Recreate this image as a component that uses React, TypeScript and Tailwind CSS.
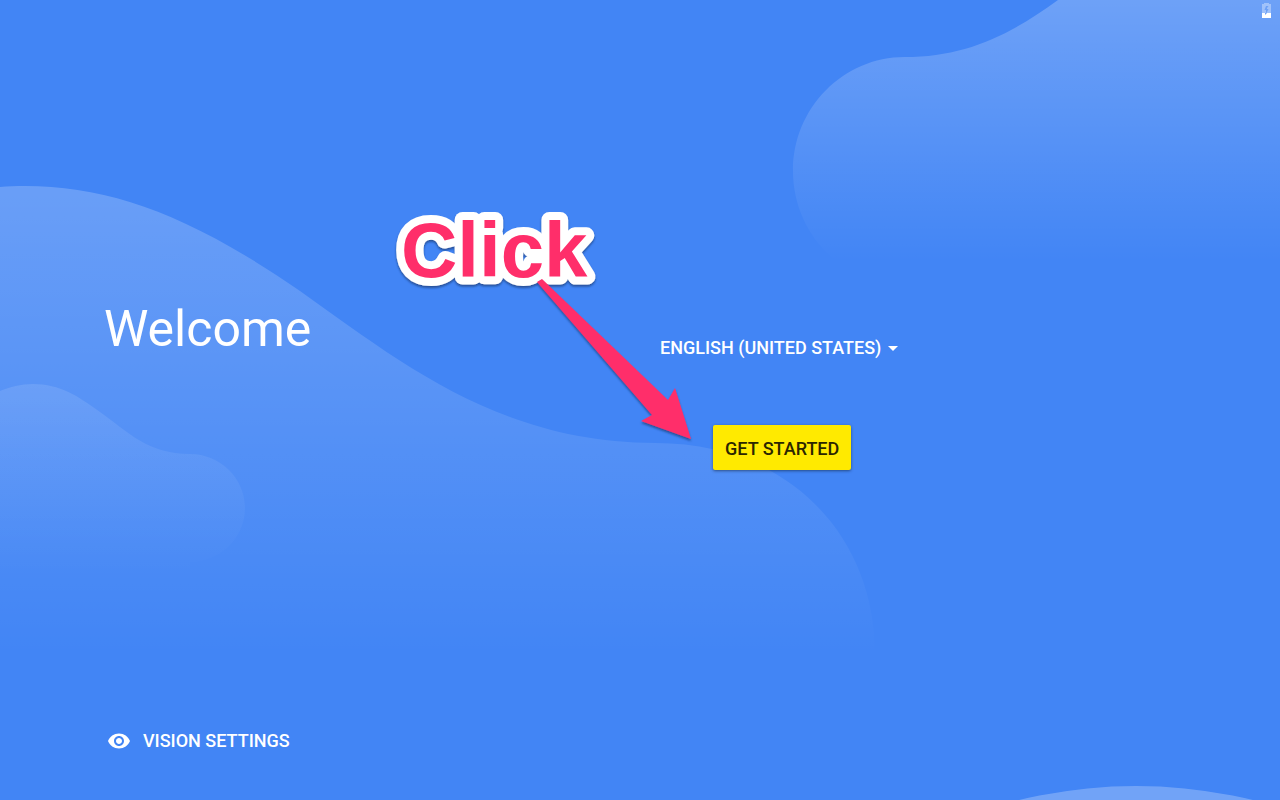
import { MdArrowDropDown, MdRemoveRedEye } from "react-icons/md";

function Backdrop() {
  return (
    <svg
      className="absolute inset-0 h-full w-full"
      viewBox="0 0 1280 800"
      preserveAspectRatio="none"
      aria-hidden="true"
    >
      <defs>
        <linearGradient id="fade" x1="0" y1="0" x2="0" y2="1">
          <stop offset="0" stopColor="#fff" stopOpacity="0.21" />
          <stop offset="1" stopColor="#fff" stopOpacity="0" />
        </linearGradient>
        <linearGradient id="fadeSmall" x1="0" y1="0" x2="0" y2="1">
          <stop offset="0" stopColor="#fff" stopOpacity="0.11" />
          <stop offset="1" stopColor="#fff" stopOpacity="0" />
        </linearGradient>
        <linearGradient id="fadeTop" gradientUnits="userSpaceOnUse" x1="0" y1="-10" x2="0" y2="262">
          <stop offset="0" stopColor="#fff" stopOpacity="0.24" />
          <stop offset="1" stopColor="#fff" stopOpacity="0" />
        </linearGradient>
      </defs>
      <path
        fill="url(#fade)"
        d="M0 187C8 186 16 186 25 186C110 186 190 215 300 291C400 362 500 443 655 443C785 443 875 532 875 655H0Z"
      />
      <path
        fill="url(#fadeSmall)"
        d="M0 391C10 387 21 384 33 384C60 384 78 396 100 412C128 432 148 454 190 454C220 454 245 478 245 508C245 538 220 562 190 562V574H0Z"
      />
      <path
        fill="url(#fadeTop)"
        d="M1058 0C1010 35 965 57 905 57C843 57 793 108 793 171C793 234 843 285 905 285H1280V0Z"
      />
      <circle cx="1136" cy="1281" r="495" fill="#fff" fillOpacity="0.25" />
    </svg>
  );
}

function BatteryIcon() {
  return (
    <svg className="h-4 w-[9px]" viewBox="0 0 9 16" role="img" aria-label="Battery charging">
      <path
        fill="#fff"
        fillOpacity="0.35"
        fillRule="evenodd"
        d="M2 0h5v1h2V10H4.5L6.5 6H5V5L6.5 3H4L2.5 7H4v3H0V1h2Z"
      />
      <path fill="#fff" d="M0 10H3v2L5 10H9v5H0Z" />
    </svg>
  );
}

function Annotation() {
  return (
    <svg
      className="pointer-events-none absolute top-[200px] left-[380px] h-[250px] w-[330px]"
      viewBox="0 0 330 250"
      role="img"
      aria-label="Click"
    >
      <defs>
        <filter id="drop" x="-10%" y="-10%" width="120%" height="120%">
          <feDropShadow dx="0" dy="2" stdDeviation="1" floodColor="#0b2a5c" floodOpacity="0.6" />
        </filter>
      </defs>
      <text
        x="21"
        y="77"
        fontSize="78"
        fontWeight="700"
        fill="#ff2d6b"
        stroke="#fff"
        strokeWidth="16"
        strokeLinejoin="round"
        paintOrder="stroke"
        filter="url(#drop)"
        className="font-['Liberation_Sans',Arial,sans-serif]"
      >
        Click
      </text>
      <path
        fill="#ff2d6b"
        filter="url(#drop)"
        d="M157 82L162 79L288 200L295 188L311 239L261 221L272 215Z"
      />
    </svg>
  );
}

export default function App() {
  return (
    <div className="relative flex min-h-screen flex-col overflow-hidden bg-[#4285f5] font-[Roboto,sans-serif] text-white">
      <Backdrop />
      <header className="relative flex justify-end px-[9px] pt-[3px]">
        <BatteryIcon />
      </header>
      <main className="relative grid flex-1 grid-cols-2 items-start pt-[277px]">
        <h1 className="pl-[104px] text-[50px] leading-[66px] font-normal">Welcome</h1>
        <div className="flex flex-col items-start pt-8 pl-5">
          <div className="flex flex-col items-center gap-[57px]">
            <div className="relative flex items-center">
              <select
                aria-label="Language"
                className="h-10 appearance-none bg-transparent pr-6 text-lg font-medium text-white [field-sizing:content]"
              >
                <option>ENGLISH (UNITED STATES)</option>
              </select>
              <MdArrowDropDown className="pointer-events-none absolute right-0 size-6" />
            </div>
            <button
              type="button"
              className="mr-px h-[45px] rounded-xs bg-[#ffea00] px-3 pt-0.5 text-lg font-medium text-[#2b2600] shadow-[0_1px_3px_rgba(0,0,0,0.45)]"
            >
              GET STARTED
            </button>
          </div>
        </div>
      </main>
      <footer className="relative px-[107px] pb-[39px]">
        <button type="button" className="flex h-10 items-center gap-3 text-lg font-medium">
          <MdRemoveRedEye className="size-6" />
          VISION SETTINGS
        </button>
      </footer>
      <Annotation />
    </div>
  );
}
